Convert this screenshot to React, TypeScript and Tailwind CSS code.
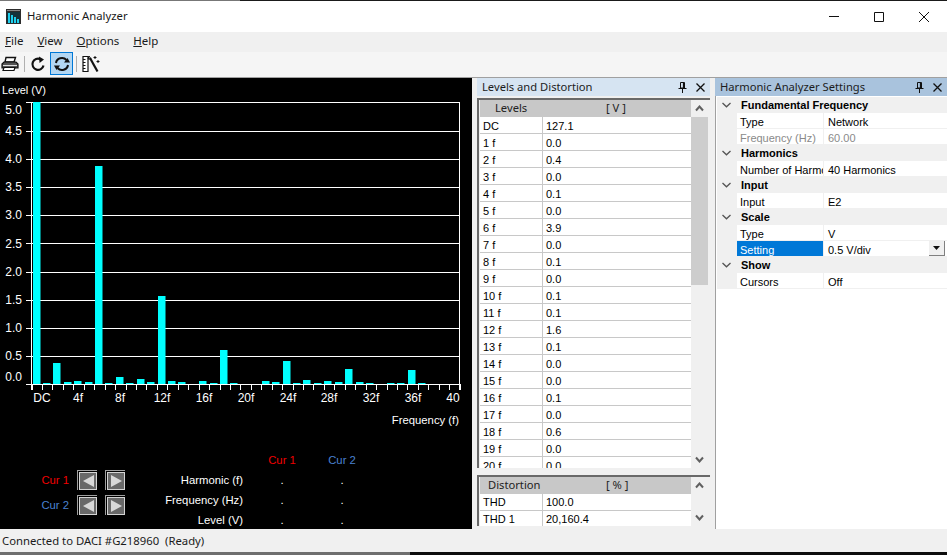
const ui = "font-['Noto_Sans','Open_Sans',sans-serif]";
const grid = "font-['Liberation_Sans',Arial,sans-serif]";

const levels = [
  ['DC', '127.1'], ['1 f', '0.0'], ['2 f', '0.4'], ['3 f', '0.0'], ['4 f', '0.1'], ['5 f', '0.0'], ['6 f', '3.9'],
  ['7 f', '0.0'], ['8 f', '0.1'], ['9 f', '0.0'], ['10 f', '0.1'], ['11 f', '0.1'], ['12 f', '1.6'], ['13 f', '0.1'],
  ['14 f', '0.0'], ['15 f', '0.0'], ['16 f', '0.1'], ['17 f', '0.0'], ['18 f', '0.6'], ['19 f', '0.0'], ['20 f', '0.0'],
];

const distortion = [['THD', '100.0'], ['THD 1', '20,160.4']];

// bar height in pixels for DC, 1f, 2f ...
const bars = [282, 1, 21, 2, 3, 2, 218, 1, 7, 1, 5, 2, 88, 3, 2, 0, 3, 1, 34, 1, 0, 0, 3, 2, 23, 1, 4, 1, 3, 2, 15, 2, 1, 0, 1, 1, 14, 1];

const yLabels = [
  ['5.0', 110], ['4.5', 131], ['4.0', 159], ['3.5', 187], ['3.0', 215], ['2.5', 244],
  ['2.0', 272], ['1.5', 300], ['1.0', 328], ['0.5', 356], ['0.0', 377],
] as const;

const gridLines = [102, 131, 159, 187, 215, 243, 272, 300, 328, 356, 384];

const xLabels = [
  ['DC', 42], ['4f', 78], ['8f', 120], ['12f', 162], ['16f', 204], ['20f', 246],
  ['24f', 288], ['28f', 329], ['32f', 371], ['36f', 413], ['40', 453],
] as const;

function AppIcon() {
  return (
    <svg width="15" height="15" viewBox="0 0 15 15" className="shrink-0">
      <rect width="15" height="15" fill="#2c2c2c" />
      <rect x="1" y="3" width="13" height="11" fill="#14323a" />
      <path d="M1 1.5h13" stroke="#8a8a8a" />
      <rect x="2" y="4" width="2" height="10" fill="#1fd0ee" />
      <rect x="5" y="6" width="2" height="8" fill="#1fd0ee" />
      <rect x="8" y="8" width="2" height="6" fill="#1fd0ee" />
      <rect x="11" y="10" width="2" height="4" fill="#1fd0ee" />
    </svg>
  );
}

function PrinterIcon() {
  return (
    <svg width="18" height="16" viewBox="0 0 18 16">
      <path d="M5 1.5h9.5L13 6H4z" fill="#fff" stroke="#111" strokeWidth="1.4" />
      <path d="M3 6h12l2 2v4H1V8z" fill="#555" stroke="#111" strokeWidth="1.2" />
      <path d="M2 9.5h14" stroke="#ddd" />
      <path d="M3 11.5h11l-1 3H2z" fill="#fff" stroke="#111" strokeWidth="1.2" />
    </svg>
  );
}

function RefreshOnce() {
  return (
    <svg width="16" height="16" viewBox="0 0 16 16" fill="none">
      <path d="M13.5 9.5A5.6 5.6 0 1 1 10.5 3.2" stroke="#111" strokeWidth="2.2" />
      <path d="M9 0.5l5 3-4.5 3.5z" fill="#111" />
    </svg>
  );
}

function RefreshLoop() {
  return (
    <svg width="18" height="16" viewBox="0 0 18 16" fill="none">
      <path d="M3 7A6 5.6 0 0 1 13.5 4" stroke="#111" strokeWidth="2" />
      <path d="M15 9A6 5.6 0 0 1 4.5 12" stroke="#111" strokeWidth="2" />
      <path d="M11 6.5h6L14.5 2z" fill="#111" />
      <path d="M7 9.5H1L3.5 14z" fill="#111" />
    </svg>
  );
}

function RulerWandIcon() {
  return (
    <svg width="18" height="18" viewBox="0 0 18 18" fill="none">
      <path d="M1 1.5h5v15H1z" fill="#fff" stroke="#111" strokeWidth="1.2" />
      <path d="M1 4.5h2.5M1 7.5h2.5M1 10.5h2.5M1 13.5h2.5" stroke="#111" />
      <path d="M8 3l7.5 13.5" stroke="#111" strokeWidth="2.2" />
      <path d="M7 1l-1 3 3 0zM13 1v3M11.5 2.5h3M16 5v3M14.5 6.5h3" stroke="#111" />
    </svg>
  );
}

function PinIcon() {
  return (
    <svg width="9" height="11" viewBox="0 0 9 11" fill="none" stroke="#111">
      <path d="M2.5 0.5h4v5.5h-4z" />
      <path d="M5.5 1v5" strokeWidth="1.2" />
      <path d="M0.5 6.5h8M4.5 7v4" />
    </svg>
  );
}

function CloseIcon() {
  return (
    <svg width="9" height="9" viewBox="0 0 9 9" stroke="#111" strokeWidth="1.3">
      <path d="M0.5 0.5l8 8M8.5 0.5l-8 8" />
    </svg>
  );
}

function Chevron({ up = false }: { up?: boolean }) {
  return (
    <svg width="9" height="7" viewBox="0 0 9 7" fill="none" stroke="#606060" strokeWidth="2" className={up ? '' : 'rotate-180'}>
      <path d="M1 5.5l3.5-4 3.5 4" />
    </svg>
  );
}

function CategoryChevron() {
  return (
    <svg width="9" height="6" viewBox="0 0 9 6" fill="none" stroke="#555" strokeWidth="1.3">
      <path d="M0.5 1l4 3.8 4-3.8" />
    </svg>
  );
}

function ArrowButton({ right = false }: { right?: boolean }) {
  return (
    <div className="h-5 w-5 border-t border-l border-[#a0a0a0] pt-px pl-px">
      <div className="flex h-full w-full items-center justify-center border border-[#d4d4d4] bg-[#696969]">
        <svg width="11" height="12" viewBox="0 0 11 12">
          <path d={right ? 'M0 0l11 6-11 6z' : 'M11 0L0 6l11 6z'} fill="#d8d8d8" />
        </svg>
      </div>
    </div>
  );
}

function Chart() {
  return (
    <svg width="472" height="372" viewBox="0 78 472 372" className={`block shrink-0 ${grid}`}>
      {gridLines.map((y) => (
        <line key={y} x1="26" x2="460" y1={y + 0.5} y2={y + 0.5} stroke="#fff" />
      ))}
      <line x1="31.5" x2="31.5" y1="102" y2="390" stroke="#fff" />
      <line x1="459.5" x2="459.5" y1="102" y2="390" stroke="#fff" />
      {Array.from({ length: 42 }, (_, i) => {
        const x = Math.round(31.6 + 10.44 * i) + 0.5;
        return <line key={i} x1={x} x2={x} y1="384" y2="390" stroke="#fff" />;
      })}
      {bars.map((h, i) =>
        h > 0 ? <rect key={i} x={Math.floor(33 + 10.42 * i)} y={384 - h} width="7.5" height={h} fill="#00ffff" /> : null,
      )}
      <text x="2" y="94" fontSize="11" fill="#fff">Level (V)</text>
      {yLabels.map(([t, y]) => (
        <text key={t} x="22" y={y + 4} fontSize="12" fill="#fff" textAnchor="end">{t}</text>
      ))}
      {xLabels.map(([t, x]) => (
        <text key={t} x={x} y="402" fontSize="12" fill="#fff" textAnchor="middle">{t}</text>
      ))}
      <text x="459" y="424" fontSize="11.3" fill="#fff" textAnchor="end">Frequency (f)</text>
    </svg>
  );
}

function CursorPanel() {
  const rows = [
    ['Harmonic (f)', '.', '.'],
    ['Frequency (Hz)', '.', '.'],
    ['Level (V)', '.', '.'],
  ];
  return (
    <div className={`flex h-[79px] text-[11.3px] text-white ${grid}`}>
      <div className="flex w-[125px] flex-col gap-[5px] pt-[20px]">
        <div className="flex items-center">
          <span className="w-[70px] text-right text-[#f00000]">Cur 1</span>
          <div className="ml-2 flex gap-2"><ArrowButton /><ArrowButton right /></div>
        </div>
        <div className="flex items-center">
          <span className="w-[70px] text-right text-[#4a80d0]">Cur 2</span>
          <div className="ml-2 flex gap-2"><ArrowButton /><ArrowButton right /></div>
        </div>
      </div>
      <div className="grid grid-cols-[118px_78px_42px] auto-rows-[20px] items-center">
        <span />
        <span className="text-center text-[#f00000]">Cur 1</span>
        <span className="text-center whitespace-nowrap text-[#4a80d0]">Cur 2</span>
        {rows.map(([label, a, b]) => (
          <div key={label} className="contents">
            <span className="text-right whitespace-nowrap">{label}</span>
            <span className="text-center">{a}</span>
            <span className="text-center">{b}</span>
          </div>
        ))}
      </div>
    </div>
  );
}

function PanelHeader({ title, active = false }: { title: string; active?: boolean }) {
  return (
    <div className={`flex h-[18px] shrink-0 items-center pr-[5px] pl-[5px] ${active ? 'bg-[#a9c3dd]' : 'bg-[#d6e4f2]'}`}>
      <span className={`flex-1 text-[11.2px] text-[#1c1c1c] ${ui}`}>{title}</span>
      <span className="mr-[9px] flex"><PinIcon /></span>
      <CloseIcon />
    </div>
  );
}

function DataGrid({ title, unit, rows, titleClass, thumb, rowClass, className }: {
  title: string;
  unit: string;
  rows: string[][];
  titleClass: string;
  thumb: string;
  rowClass: string;
  className: string;
}) {
  return (
    <div className={`flex overflow-hidden border-t-2 border-l-2 border-[#696969] bg-[#f0f0f0] ${className}`}>
      <div className="w-[212px] shrink-0 pl-px">
        <div className={`flex h-[17px] items-center bg-[#c8c8c8] text-[11.2px] text-[#222] ${ui}`}>
          <span className={`w-[62px] ${titleClass}`}>{title}</span>
          <span className="ml-[64px] whitespace-pre">{unit}</span>
        </div>
        {rows.map(([name, value]) => (
          <div key={name} className={`flex h-[17px] border-b border-[#c8c8c8] bg-white text-[11px] text-black ${rowClass} ${grid}`}>
            <span className="w-[63px] border-r border-[#c8c8c8] pl-[3px]">{name}</span>
            <span className="pl-[3px]">{value}</span>
          </div>
        ))}
      </div>
      <div className="flex w-[17px] shrink-0 flex-col">
        <div className="flex h-[17px] shrink-0 items-center justify-center"><Chevron up /></div>
        <div className={`shrink-0 bg-[#cdcdcd] ${thumb}`} />
        <div className="flex-1" />
        <div className="flex h-[17px] shrink-0 items-center justify-center"><Chevron /></div>
      </div>
    </div>
  );
}

function Category({ label }: { label: string }) {
  return (
    <div className={`flex h-4 items-center bg-[#f0f0f0] text-[11px] font-bold text-black ${grid}`}>
      <span className="flex w-[20px] justify-center pr-[2px]"><CategoryChevron /></span>
      <span className="pl-[4px]">{label}</span>
    </div>
  );
}

function Prop({ label, value, muted = false, selected = false }: { label: string; value: string; muted?: boolean; selected?: boolean }) {
  return (
    <div className={`flex h-4 border-b border-[#f0f0f0] text-[11px] leading-[18px] ${grid} ${muted ? 'text-[#8a8a8a]' : 'text-black'}`}>
      <span className="w-[20px] shrink-0 bg-[#f0f0f0]" />
      <span className={`w-[87px] shrink-0 overflow-hidden border-r border-[#f0f0f0] pl-[3px] whitespace-nowrap ${selected ? 'bg-[#0078d7] text-white' : ''}`}>{label}</span>
      <span className="flex-1 pl-[4px]">{value}</span>
      {selected && (
        <span className="mr-[2px] flex h-[15px] w-4 items-center justify-center border-r border-b border-[#808080] bg-[#f0f0f0]">
          <svg width="7" height="4" viewBox="0 0 7 4"><path d="M0 0h7L3.5 4z" fill="#111" /></svg>
        </span>
      )}
    </div>
  );
}

export default function App() {
  return (
    <div className="flex h-[555px] w-[947px] flex-col overflow-hidden bg-[#f0f0f0]">
      {/* window title */}
      <div className="flex h-px shrink-0 bg-[#1a1a1a]">
        <div className="w-[240px] bg-[#777]" />
      </div>
      <div className="flex h-[31px] shrink-0 items-center bg-white pl-[6px]">
        <AppIcon />
        <span className={`ml-[6px] flex-1 text-[11.3px] text-[#1a1a1a] ${ui}`}>Harmonic Analyzer</span>
        <div className="flex items-center">
          <span className="flex h-[31px] w-[45px] items-center justify-center">
            <svg width="10" height="1"><path d="M0 .5h10" stroke="#111" /></svg>
          </span>
          <span className="flex h-[31px] w-[45px] items-center justify-center">
            <svg width="10" height="10" fill="none"><path d="M.5.5h9v9h-9z" stroke="#111" /></svg>
          </span>
          <span className="flex h-[31px] w-[46px] items-center justify-center">
            <svg width="10" height="10" stroke="#111"><path d="M0 0l10 10M10 0L0 10" /></svg>
          </span>
        </div>
      </div>

      {/* menu */}
      <div className={`flex h-5 shrink-0 items-center gap-[14px] bg-[#f0f0f0] pb-[2px] pl-[5px] text-[11.5px] text-[#1a1a1a] ${ui}`}>
        <span><u>F</u>ile</span>
        <span><u>V</u>iew</span>
        <span><u>O</u>ptions</span>
        <span><u>H</u>elp</span>
      </div>

      {/* toolbar */}
      <div className="flex h-[26px] shrink-0 items-center border-b border-[#a0a0a0] bg-[#f5f5f5] pb-[2px] pl-px">
        <PrinterIcon />
        <span className="mx-[5px] h-[16px] w-px bg-[#b0b0b0]" />
        <RefreshOnce />
        <span className="ml-[4px] flex h-[23px] w-[23px] items-center justify-center border border-[#0078d7] bg-[#b3d7f3]">
          <RefreshLoop />
        </span>
        <span className="mr-[5px] ml-[3px] h-[16px] w-px bg-[#b0b0b0]" />
        <RulerWandIcon />
      </div>

      {/* panels */}
      <div className="flex h-[451px] shrink-0">
        <div className="flex w-[472px] shrink-0 flex-col bg-black">
          <Chart />
          <CursorPanel />
        </div>
        <div className="ml-[5px] flex w-[233px] shrink-0 flex-col">
          <PanelHeader title="Levels and Distortion" />
          <DataGrid className="mt-[2px] h-[370px]" title="Levels" titleClass="pl-[15px]" unit="[ V ]" rows={levels} rowClass="leading-[18px]" thumb="h-[168px]" />
          <DataGrid className="mt-[7px] h-[51px]" title="Distortion" titleClass="pl-[8px]" unit="[ % ]" rows={distortion} rowClass="leading-[16px]" thumb="h-0" />
        </div>
        <div className="ml-[5px] flex w-[232px] shrink-0 flex-col">
          <PanelHeader title="Harmonic Analyzer Settings" active />
          <div className="flex-1 border-l border-[#a0a0a0] bg-white pt-px pl-px">
            <Category label="Fundamental Frequency" />
            <Prop label="Type" value="Network" />
            <Prop label="Frequency (Hz)" value="60.00" muted />
            <Category label="Harmonics" />
            <Prop label="Number of Harmonics" value="40 Harmonics" />
            <Category label="Input" />
            <Prop label="Input" value="E2" />
            <Category label="Scale" />
            <Prop label="Type" value="V" />
            <Prop label="Setting" value="0.5 V/div" selected />
            <Category label="Show" />
            <Prop label="Cursors" value="Off" />
          </div>
        </div>
      </div>

      {/* status */}
      <div className={`flex h-[23px] shrink-0 items-center pt-[2px] pl-[2px] text-[11.3px] whitespace-pre text-[#1a1a1a] ${ui}`}>
        Connected to DACI #G218960  (Ready)
      </div>
      <div className="flex flex-1 bg-[#0c0c0c]">
        <div className="w-[410px] bg-[#6e6e6e]" />
      </div>
    </div>
  );
}
